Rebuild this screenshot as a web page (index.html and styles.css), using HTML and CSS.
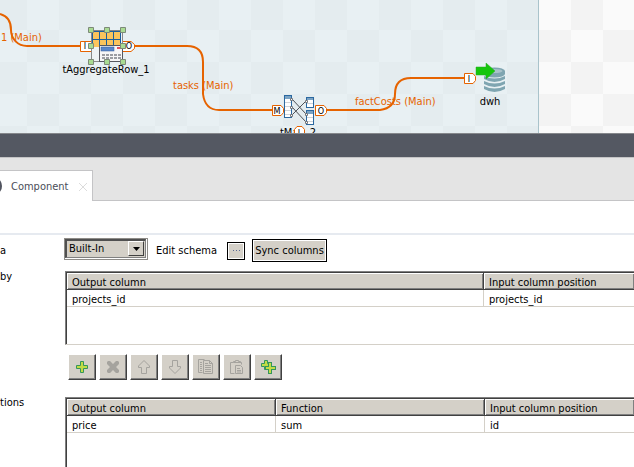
FILE: index.html
```html
<!DOCTYPE html>
<html lang="en">
<head>
<meta charset="utf-8">
<title>Job designer</title>
<link rel="stylesheet" href="styles.css">
</head>
<body>
<main class="app">
  <section class="canvas" aria-label="Job design">
    <svg class="diagram" width="538" height="133">
      <g class="link">
        <path d="M0 14 C8 16 11 22 11 30 C11 39 18 46 27 46 H81"/>
        <path d="M133 46 H187 Q203 46 203 62 V94 Q205 110 219 110 H272"/>
        <path d="M326 110 H380 Q395 108 395 94 Q395 78 411 78 H465"/>
      </g>
      <g class="link-label">
        <text x="1" y="41">1 (Main)</text>
        <text x="173" y="89">tasks (Main)</text>
        <text x="355" y="105">factCosts (Main)</text>
      </g>
      <g class="port">
        <path d="M80.5 41.5 H92 V51.5 H80.5Z"/>
        <path d="M122 41.5 H131 L134.500 44.500 V48.500 L131 51.500 H122Z"/>
        <path d="M272.500 105.500 H281 L283.500 108.500 V112.500 L281 115.500 H272.500Z"/>
        <path d="M315.500 105.500 H324 L326.500 108.500 V112.500 L324 115.500 H315.500Z"/>
        <path d="M464.500 73.500 H473 L475.500 76.500 V80.500 L473 83.500 H464.500Z"/>
      </g>
      <g class="port-label">
        <text x="85" y="49">I</text>
        <text x="129" y="49">O</text>
        <text x="277" y="114">M</text>
        <text x="321" y="114">O</text>
        <text x="469" y="82">I</text>
      </g>

      <g>
        <rect x="91.500" y="30.500" width="31" height="31" fill="#eef3f5" stroke="#888"/>
        <rect x="92" y="31" width="29" height="16" fill="#1c5f9c"/>
        <path fill="#fbc45c" d="M93 32h6v7h-6zM100 32h6v7h-6zM107 32h6v7h-6zM114 32h6v7h-6zM93 40h6v7h-6zM100 40h6v7h-6zM107 40h6v7h-6zM114 40h6v7h-6z"/>
        <rect x="99.500" y="45.500" width="23" height="16" fill="#f6f6f6" stroke="#56585f"/>
        <rect x="101" y="47" width="13" height="4" fill="#5a86c8" stroke="#335c9c" stroke-width="0.500"/>
        <rect x="117" y="47" width="4" height="2" fill="#e2525a"/>
        <path d="M102 55h19M102 58h19" stroke="#9b9da2" stroke-width="2" stroke-dasharray="3 1"/>
        <path class="handle" d="M88.500 27.500h5v5h-5zM104.500 27.500h5v5h-5zM120.500 27.500h5v5h-5zM88.500 43.500h5v5h-5zM120.500 43.500h5v5h-5zM88.500 59.500h5v5h-5zM104.500 59.500h5v5h-5zM120.500 59.500h5v5h-5z"/>
      </g>

      <g>
        <g fill="#fff" stroke="#2b68a0">
          <rect x="284.500" y="95.500" width="7" height="22"/>
          <rect x="306.500" y="97.500" width="7" height="10"/>
          <rect x="306.500" y="110.500" width="7" height="14"/>
        </g>
        <path fill="#7ba3c4" d="M285 96h6v3h-6zM307 98h6v2h-6zM307 111h6v3h-6z"/>
        <path stroke="#cfd4d8" d="M285 102.500h6M285 106.500h6M285 110.500h6M285 114.500h6M307 103.500h6M307 117.500h6M307 121.500h6"/>
        <path stroke="#4c4f55" fill="none" d="M292 99L306 114M292 107L306 122M292 115L306 101"/>
        <path fill="#fff" stroke="#74777c" d="M290.500 98.500h2v2h-2zM290.500 106.500h2v2h-2zM290.500 114.500h2v2h-2zM305.500 100.500h2v2h-2zM305.500 113.500h2v2h-2zM305.500 121.500h2v2h-2z"/>
      </g>

      <g>
        <g fill="#7fa5b1">
          <path d="M484 71a10.500 3.500 0 0 1 21 0v3a10.500 3.500 0 0 1-21 0z"/>
          <path d="M484 76q10.500 5 21 0v3q-10.500 6-21 0z"/>
          <path d="M484 81q10.500 5 21 0v3q-10.500 6-21 0z"/>
          <path d="M484 86q10.500 5 21 0v3q-10.500 6-21 0z"/>
        </g>
        <ellipse cx="494.500" cy="71" rx="8" ry="2" fill="#a9c2ca"/>
        <path fill="#16c60c" stroke="#2bab25" stroke-width="0.500" d="M476 67h10v-4l9 8-9 8v-4h-10z"/>
      </g>

      <g class="node-label">
        <text x="106" y="73">tAggregateRow_1</text>
        <text x="298" y="136">tMap_2</text>
        <text x="490" y="105">dwh</text>
      </g>
      <g class="port">
        <path d="M294.500 133V129.500L297 126.500H302L304.500 129.500V133"/>
      </g>
      <g class="port-label"><text x="300" y="136">L</text></g>
    </svg>
  </section>

  <div class="sash"></div>

  <nav class="tabs">
    <div class="tab">
      <svg class="tab-icon" width="3" height="14"><ellipse cx="-3" cy="7" rx="4" ry="6" fill="#7c9cc0" stroke="#51545f" stroke-width="2"/></svg>
      <a class="tab-title" href="#component">Component</a>
      <button class="tab-close" aria-label="Close"><svg width="8" height="8"><path d="M0 0L8 8M8 0L0 8" stroke="#dcdcdc"/></svg></button>
    </div>
    <div class="tabs-rest"></div>
  </nav>

  <section class="panel" id="component">
    <div class="panel-head"></div>
    <div class="field">
      <label class="field-label" for="schema">a</label>
      <div class="schema">
        <div class="combo">
          <select id="schema"><option>Built-In</option></select>
          <span class="combo-arrow"><svg width="7" height="4"><path d="M0 0h7L3.500 4z"/></svg></span>
        </div>
        <span class="schema-text">Edit schema</span>
        <button class="flat dots" aria-label="Edit schema"><svg width="9" height="2"><path fill="#5a6a94" d="M1 0h1v1H1zM4 0h1v1H4zM7 0h1v1H7z"/></svg></button>
        <button class="flat sync">Sync columns</button>
      </div>
    </div>

    <div class="field">
      <span class="field-label" id="group-by">by</span>
      <div class="grid-box">
        <table class="grid" aria-labelledby="group-by">
          <colgroup><col class="col-wide"><col></colgroup>
          <thead><tr><th>Output column</th><th>Input column position</th></tr></thead>
          <tbody><tr><td>projects_id</td><td>projects_id</td></tr></tbody>
        </table>
      </div>
    </div>

    <div class="toolbar">
      <button class="tool" aria-label="Add"><svg width="14" height="14"><path d="M5.500 1.500h3v4h4v3h-4v4h-3v-4h-4v-3h4z" fill="#c2dc45" stroke="#35965a"/></svg></button>
      <button class="tool" aria-label="Remove"><svg width="14" height="14"><path d="M2 1h2l3 3 3-3h2l1 1v2l-3 3 3 3v2l-1 1h-2l-3-3-3 3H2l-1-1v-2l3-3-3-3V2z" fill="#a5a39e"/></svg></button>
      <button class="tool" aria-label="Move up"><svg class="dim" width="14" height="16"><path d="M7 1.500L12.500 7v1.500h-3v6h-5v-6h-3V7z"/></svg></button>
      <button class="tool" aria-label="Move down"><svg class="dim" width="14" height="16"><path d="M7 14.500L12.500 9V7.500h-3v-6h-5v6h-3V9z"/></svg></button>
      <button class="tool" aria-label="Copy"><svg class="dim" width="16" height="16"><path d="M4.500 13.500h-4V.5h6M2 3.500h2M2 5.500h2M2 7.500h2M2 9.500h2M2 11.500h2M5.500 1.500h6l3 3v10h-9zM11.500 1.500v3h3M7 4.500h3M7 6.500h6M7 8.500h6M7 10.500h6M7 12.500h6"/></svg></button>
      <button class="tool" aria-label="Paste"><svg class="dim" width="14" height="16"><path d="M4.500 14.500h-4v-11h3M9.500 3.500h2v2M3.500 3.500v-1h2v-1h3v1h2v1zM5.500 6.500h5l2 2v6h-7zM7 9.500h3M7 11.500h4M7 13h4"/></svg></button>
      <button class="tool" aria-label="Add all"><svg width="16" height="16"><g fill="#c2dc45" stroke="#35965a"><path d="M4.500 1.500h3v3h3v3h-3v3h-3v-3h-3v-3h3z"/><path stroke="none" d="M8 3h4v4h4v4h-4v4H8v-4H5V7h3z" fill="#35965a"/><path stroke="none" d="M9 4h2v4h4v2h-4v4H9v-4H6V8h3z"/></g></svg></button>
    </div>

    <div class="field">
      <span class="field-label" id="functions">tions</span>
      <div class="grid-box tall">
        <table class="grid" aria-labelledby="functions">
          <colgroup><col class="col-half"><col class="col-half"><col></colgroup>
          <thead><tr><th>Output column</th><th>Function</th><th>Input column position</th></tr></thead>
          <tbody><tr><td>price</td><td>sum</td><td>id</td></tr></tbody>
        </table>
      </div>
    </div>
  </section>
</main>
</body>
</html>
```
FILE: styles.css
```css
* { box-sizing: border-box; }

body {
  margin: 0;
  background: #fff;
  color: #000;
  font: 11px/14px "DejaVu Sans Condensed", Tahoma, sans-serif;
}

svg { display: block; }

button, select, th { font: inherit; color: inherit; }

.app {
  height: 100vh;
  display: flex;
  flex-direction: column;
  overflow: hidden;
}

/* Design canvas */
.canvas {
  flex: none;
  overflow: hidden;
  background: repeating-conic-gradient(#f3f3f3 0 25%, #fafafa 0 50%) 27px -2px / 64px 64px;
}

.diagram {
  box-sizing: content-box;
  border-right: 1px solid #a9c3cb;
  background: repeating-conic-gradient(#e4ecef 0 25%, #e8f0f3 0 50%) 27px -2px / 64px 64px;
}

.link path { fill: none; stroke: #e66300; stroke-width: 2; }
.link-label { fill: #e66300; }
.port path { fill: #fff; stroke: #e66300; }
.port-label { font-size: 9px; text-anchor: middle; }
.node-label { text-anchor: middle; }
.handle { fill: #a9db92; stroke: #7d8a78; }

.sash {
  flex: none;
  height: 25px;
  background: #545862;
  border-top: 1px solid #85878b;
  border-bottom: 1px solid #c4c4c6;
}

/* Tabs */
.tabs {
  flex: none;
  display: flex;
  padding-top: 12px;
  background: #e4e4e4;
}

.tab {
  display: flex;
  align-items: center;
  height: 31px;
  padding-right: 5px;
  background: #fff;
  border-top: 1px solid #c4c4c6;
  border-right: 1px solid #c4c4c6;
}

.tab-icon { margin-right: 8px; }
.tab-title { width: 68px; padding-top: 2px; color: #4a4d59; text-decoration: none; }
.tab-close { padding: 2px 0 0; border: 0; background: none; }
.tabs-rest { flex: 1; border-bottom: 1px solid #c4c4c6; }

/* Component settings */
.panel { flex: 1; }

.panel-head {
  height: 34px;
  margin-bottom: 3px;
  border-bottom: 2px solid #e6eaf0;
}

.field { display: flex; }
.field-label { flex: none; width: 65px; padding-top: 6px; }
.schema { display: flex; align-items: center; height: 25px; }

.combo {
  align-self: flex-start;
  display: grid;
  width: 84px;
  height: 22px;
  margin-left: -1px;
  padding: 0 1px 1px 0;
  border: 1px solid #8e8c88;
}

.combo select {
  grid-area: 1 / 1;
  appearance: none;
  width: 100%;
  height: 100%;
  padding: 0 2px;
  border: 2px solid #505050;
  border-width: 2px 1px 1px 2px;
  border-right-color: #808080;
  border-bottom-color: #808080;
  border-radius: 0;
  background: #d4d0c8;
}

.combo-arrow {
  grid-area: 1 / 1;
  justify-self: end;
  align-self: center;
  display: grid;
  place-items: center;
  width: 16px;
  height: 15px;
  margin-right: 2px;
  background: #d4d0c8;
  border: 1px solid #fff;
  border-right-color: #404040;
  border-bottom-color: #404040;
  pointer-events: none;
}

.schema-text { width: 71px; margin-left: 8px; padding-top: 1px; }

.flat {
  padding: 0;
  border: 1px solid #000;
  border-radius: 0;
  background: #d4d0c8;
  box-shadow: inset 0 0 0 1px #fff;
}

.dots {
  display: grid;
  place-items: center;
  width: 18px;
  height: 18px;
}

.sync {
  width: 75px;
  height: 23px;
  margin-left: 7px;
  white-space: nowrap;
}

.grid-box {
  flex: 1;
  height: 74px;
  margin-top: 8px;
  padding: 1px 0 0 1px;
  border: solid #808080;
  border-width: 1px 0 0 1px;
  border-bottom: 1px solid #d4d0c8;
  box-shadow: inset 1px 1px #404040;
}

.field-label[id] { padding-top: 7px; }
.tall { height: 90px; }

.grid {
  width: 100%;
  table-layout: fixed;
  border-spacing: 0;
}

.col-wide { width: 417px; }
.col-half { width: 209px; }

.grid th, .grid td {
  height: 17px;
  padding: 3px 5px 0;
  line-height: 13px;
  text-align: left;
  white-space: nowrap;
}

.grid th {
  background: #d4d0c8;
  border-right: 1px solid #404040;
  border-bottom: 1px solid #404040;
  box-shadow: inset 1px 1px #fff, inset -1px -1px #808080;
}

.grid td {
  border-right: 1px solid #d4d0c8;
  border-bottom: 1px solid #d4d0c8;
}

.grid th:last-child, .grid td:last-child { border-right: 0; }

/* Row actions */
.toolbar {
  display: flex;
  gap: 3px;
  padding: 9px 0 9px 68px;
}

.tool {
  display: grid;
  place-items: center;
  width: 28px;
  height: 26px;
  padding: 0;
  border: 1px solid #fff;
  border-right-color: #404040;
  border-bottom-color: #404040;
  border-radius: 0;
  background: #d4d0c8;
  box-shadow: inset -1px -1px #808080;
}

.dim { fill: none; stroke: #a5a39e; }
```
